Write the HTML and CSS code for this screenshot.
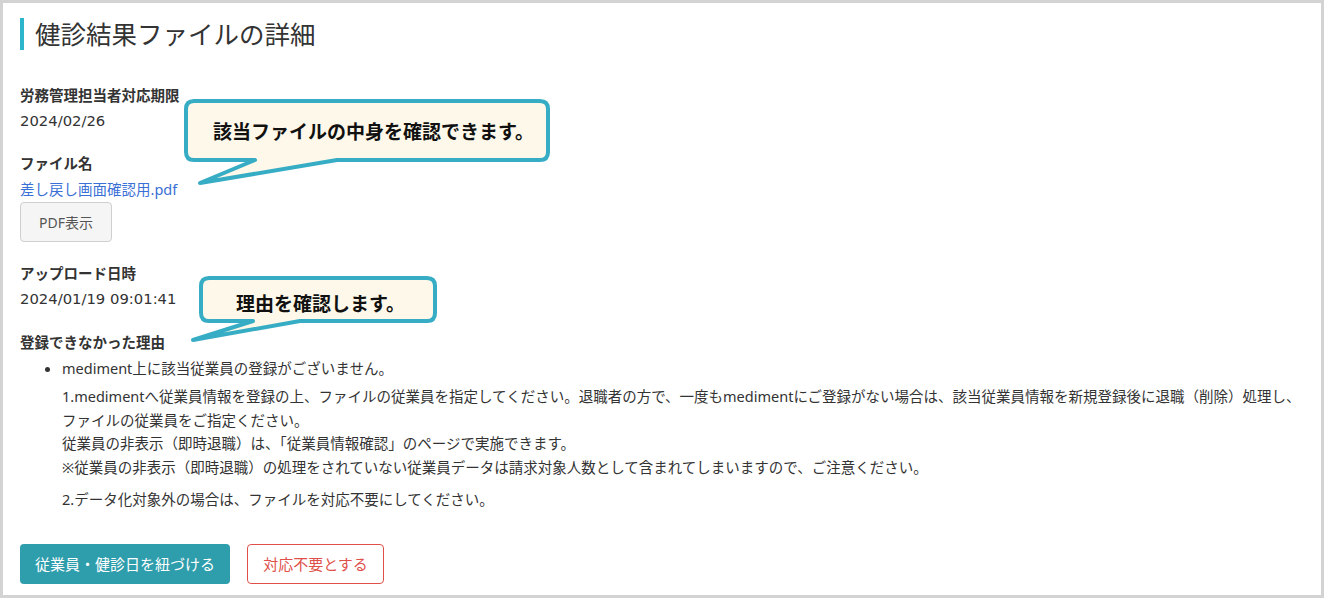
FILE: index.html
```html
<!DOCTYPE html>
<html lang="ja">
<head>
    <meta charset="UTF-8">
    <meta name="viewport" content="width=device-width, initial-scale=1.0">
    <title>健診結果ファイルの詳細</title>
    <link rel="stylesheet" href="styles.css">
</head>
<body>
    <div class="page">
        <h1 class="page-title">健診結果ファイルの詳細</h1>

        <dl class="detail">
            <dt>労務管理担当者対応期限</dt>
            <dd class="date">2024/02/26</dd>

            <dt>ファイル名</dt>
            <dd>
                <a href="#" class="file-link">差し戻し画面確認用.pdf</a><br>
                <button type="button" class="pdf-button">PDF表示</button>
            </dd>

            <dt>アップロード日時</dt>
            <dd class="date">2024/01/19 09:01:41</dd>

            <dt>登録できなかった理由</dt>
            <dd>
                <ul class="reason-list">
                    <li>
                        mediment上に該当従業員の登録がございません。
                        <p class="reason-text">1.medimentへ従業員情報を登録の上、ファイルの従業員を指定してください。退職者の方で、一度もmedimentにご登録がない場合は、該当従業員情報を新規登録後に退職（削除）処理し、ファイルの従業員をご指定ください。<br>従業員の非表示（即時退職）は、「従業員情報確認」のページで実施できます。<br>※従業員の非表示（即時退職）の処理をされていない従業員データは請求対象人数として含まれてしまいますので、ご注意ください。</p>
                        <p class="reason-text second">2.データ化対象外の場合は、ファイルを対応不要にしてください。</p>
                    </li>
                </ul>
            </dd>
        </dl>

        <div class="actions">
            <button type="button" class="link-button">従業員・健診日を紐づける</button>
            <button type="button" class="skip-button">対応不要とする</button>
        </div>

        <!-- callouts laid over the page -->
        <div class="callout callout-file">
            <svg class="callout-shape" width="375" height="95" viewBox="0 0 375 95">
                <path d="M14,6 H360 Q368,6 368,14 V57 Q368,65 360,65 H157 L20,88 L75,65 H14 Q6,65 6,57 V14 Q6,6 14,6 Z"/>
            </svg>
            <span class="callout-text">該当ファイルの中身を確認できます。</span>
        </div>
        <div class="callout callout-reason">
            <svg class="callout-shape" width="255" height="75" viewBox="0 0 255 75">
                <path d="M19,8 H237 Q245,8 245,16 V43 Q245,51 237,51 H110 L3,70 L63,51 H19 Q11,51 11,43 V16 Q11,8 19,8 Z"/>
            </svg>
            <span class="callout-text">理由を確認します。</span>
        </div>
    </div>
</body>
</html>
```

FILE: styles.css
```css
body {
    margin: 0;
    background-color: #fff;
    color: #333;
    font-family: "Noto Sans", "Noto Sans CJK JP", sans-serif;
    font-size: 14.5px;
}
.page {
    position: relative;
    box-sizing: border-box;
    width: 1324px;
    height: 598px;
    padding: 15px 17px 0 17px;
    border: 3px solid #d3d3d3;
    overflow: hidden;
}
.page-title {
    margin: 0;
    padding-left: 11px;
    height: 32px;
    border-left: 4px solid #2db5cb;
    font-size: 25.5px;
    font-weight: normal;
    line-height: 32px;
    color: #333;
}
.detail {
    margin: 32px 0 0 0;
}
.detail dt {
    font-weight: bold;
    line-height: 26px;
}
.detail dd {
    margin: 0 0 16px 0;
    line-height: 26px;
}
.detail dd.date {
    font-family: "DejaVu Sans", "Noto Sans CJK JP", sans-serif;
    font-size: 14.8px;
}
.detail dd:nth-of-type(2) {
    margin-bottom: 18px;
}
.detail dd:nth-of-type(3) {
    margin-bottom: 17px;
}
.file-link {
    color: #3a70d6;
    text-decoration: none;
}
.pdf-button {
    width: 92px;
    height: 40px;
    background: #f5f5f5;
    color: #555;
    border: 1px solid #cfcfcf;
    border-radius: 4px;
    font-family: inherit;
    font-size: 14px;
    vertical-align: top;
}
.reason-list {
    margin: 0;
    padding-left: 42px;
}
.reason-text {
    margin: 4px 0 0 0;
    line-height: 23.5px;
}
.reason-text.second {
    margin-top: 9px;
}
.actions {
    display: flex;
    gap: 17px;
    margin-top: 32px;
}
.link-button, .skip-button {
    height: 40px;
    border-radius: 4px;
    font-family: inherit;
    font-size: 15px;
    cursor: pointer;
}
.link-button {
    width: 210px;
    background: #2e9dac;
    color: #fff;
    border: none;
}
.skip-button {
    width: 137px;
    background: #fff;
    color: #e0504a;
    border: 1px solid #e0504a;
}
.callout {
    position: absolute;
}
.callout-file {
    left: 177px;
    top: 92px;
    width: 375px;
    height: 95px;
}
.callout-reason {
    left: 187px;
    top: 267px;
    width: 255px;
    height: 75px;
}
.callout-shape {
    display: block;
}
.callout-shape path {
    fill: #fdf8e9;
    stroke: #36adc4;
    stroke-width: 4;
    stroke-linejoin: round;
}
.callout-text {
    position: absolute;
    font-family: "Noto Sans CJK JP", sans-serif;
    font-size: 19px;
    font-weight: bold;
    color: #111;
    line-height: 24px;
    white-space: nowrap;
}
.callout-file .callout-text {
    left: 33px;
    top: 24px;
}
.callout-reason .callout-text {
    left: 46px;
    top: 21px;
}
```
